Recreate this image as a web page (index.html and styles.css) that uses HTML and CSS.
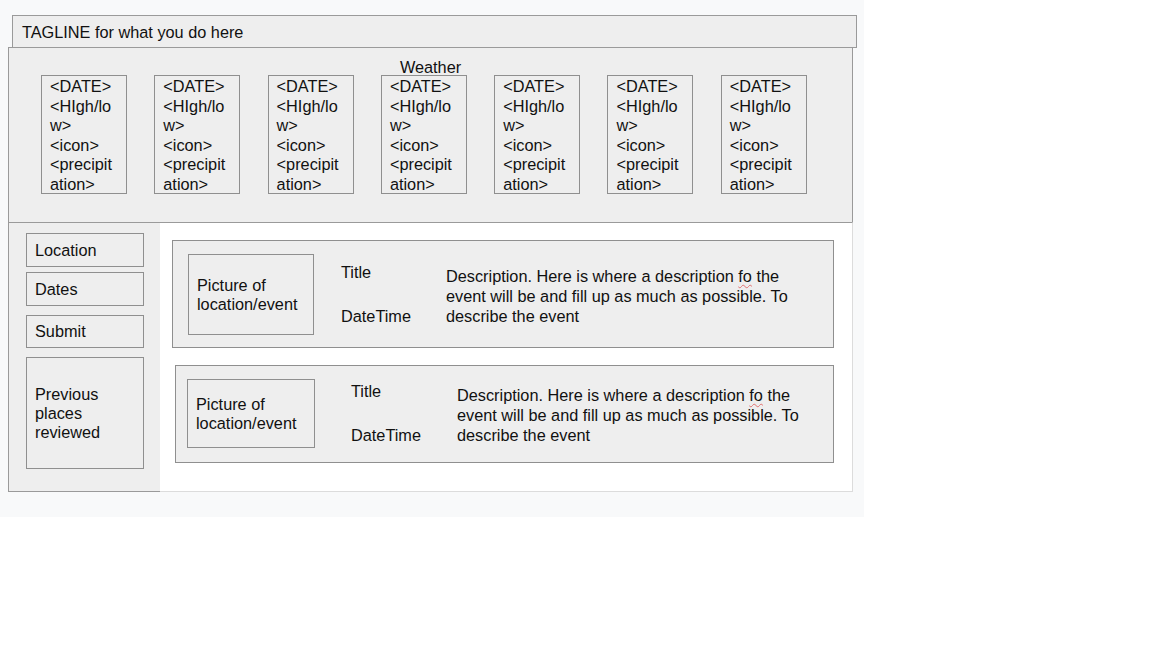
FILE: index.html
```html
<!DOCTYPE html>
<html lang="en">

<head>
    <meta charset="UTF-8">
    <meta name="viewport" content="width=device-width, initial-scale=1.0">
    <title>Wireframe</title>
    <link rel="stylesheet" href="styles.css">
</head>

<body>
    <div class="canvas">
        <!-- header -->
        <div class="tagline">TAGLINE for what you do here</div>

        <!-- weather strip -->
        <div class="weather">
            <div class="weather-title">Weather</div>
            <div class="day-row">
                <div class="day">&lt;DATE&gt;<br>&lt;HIgh/lo<br>w&gt;<br>&lt;icon&gt;<br>&lt;precipit<br>ation&gt;</div>
                <div class="day">&lt;DATE&gt;<br>&lt;HIgh/lo<br>w&gt;<br>&lt;icon&gt;<br>&lt;precipit<br>ation&gt;</div>
                <div class="day">&lt;DATE&gt;<br>&lt;HIgh/lo<br>w&gt;<br>&lt;icon&gt;<br>&lt;precipit<br>ation&gt;</div>
                <div class="day">&lt;DATE&gt;<br>&lt;HIgh/lo<br>w&gt;<br>&lt;icon&gt;<br>&lt;precipit<br>ation&gt;</div>
                <div class="day">&lt;DATE&gt;<br>&lt;HIgh/lo<br>w&gt;<br>&lt;icon&gt;<br>&lt;precipit<br>ation&gt;</div>
                <div class="day">&lt;DATE&gt;<br>&lt;HIgh/lo<br>w&gt;<br>&lt;icon&gt;<br>&lt;precipit<br>ation&gt;</div>
                <div class="day">&lt;DATE&gt;<br>&lt;HIgh/lo<br>w&gt;<br>&lt;icon&gt;<br>&lt;precipit<br>ation&gt;</div>
            </div>
        </div>

        <div class="lower">
            <!-- sidebar -->
            <div class="sidebar">
                <div class="side-btn">Location</div>
                <div class="side-btn side-btn--dates">Dates</div>
                <div class="side-btn side-btn--submit">Submit</div>
                <div class="side-history">Previous<br>places<br>reviewed</div>
            </div>

            <!-- events -->
            <div class="content">
                <div class="event event--a">
                    <div class="picture">Picture of<br>location/event</div>
                    <div class="meta">
                        <div class="meta-title">Title</div>
                        <div class="meta-date">DateTime</div>
                    </div>
                    <div class="desc">Description. Here is where a description <span class="typo">fo</span> the event will be and fill up as much as possible. To describe the event</div>
                </div>

                <div class="event event--b">
                    <div class="picture">Picture of<br>location/event</div>
                    <div class="meta">
                        <div class="meta-title">Title</div>
                        <div class="meta-date">DateTime</div>
                    </div>
                    <div class="desc">Description. Here is where a description <span class="typo">fo</span> the event will be and fill up as much as possible. To describe the event</div>
                </div>
            </div>
        </div>
    </div>
</body>

</html>
```

FILE: styles.css
```css
* {
    box-sizing: border-box;
}

body {
    margin: 0;
    background: #ffffff;
    font-family: "Liberation Sans", Arial, sans-serif;
    font-size: 16.3px;
    color: #111;
}

.canvas {
    width: 864px;
    height: 517px;
    background: #f8f9fa;
    padding-top: 15px;
    padding-left: 8px;
}

.tagline {
    margin-left: 4px;
    width: 845px;
    height: 33px;
    padding: 1px 0 0 9px;
    line-height: 31px;
    background: #eeeeee;
    border: 1px solid #9a9a9a;
}

.weather {
    margin-top: -1px;
    width: 845px;
    height: 176px;
    background: #eeeeee;
    border: 1px solid #9a9a9a;
    padding-top: 10px;
}

.weather-title {
    text-align: center;
    line-height: 18px;
    margin-bottom: -1px;
}

.day-row {
    display: flex;
    gap: 27.3px;
    padding-left: 32px;
}

.day {
    width: 86px;
    height: 119px;
    padding: 1px 0 0 8px;
    line-height: 19.5px;
    border: 1px solid #8f8f8f;
    background: #eeeeee;
}

.lower {
    display: flex;
    margin-top: -1px;
    height: 270px;
}

.sidebar {
    width: 153px;
    background: #eeeeee;
    border: 1px solid #9a9a9a;
    padding: 10px 0 0 17px;
    display: flex;
    flex-direction: column;
}

.side-btn {
    width: 118px;
    height: 34px;
    padding-left: 8px;
    line-height: 32px;
    border: 1px solid #8f8f8f;
}

.side-btn--dates {
    margin-top: 5px;
}

.side-btn--submit {
    margin-top: 9px;
    height: 33px;
    line-height: 31px;
}

.side-history {
    margin-top: 9px;
    width: 118px;
    height: 112px;
    padding-left: 8px;
    line-height: 19px;
    border: 1px solid #8f8f8f;
    display: flex;
    align-items: center;
}

.content {
    width: 693px;
    background: #ffffff;
    border-top: 1px solid #9a9a9a;
    border-right: 1px solid #dcdcdc;
    border-bottom: 1px solid #dcdcdc;
    margin-left: -1px;
    padding-top: 17px;
}

.event {
    display: flex;
    align-items: flex-start;
    background: #eeeeee;
    border: 1px solid #8f8f8f;
}

.picture {
    display: flex;
    align-items: center;
    padding-left: 8px;
    line-height: 19px;
    border: 1px solid #8f8f8f;
}

.meta-title,
.meta-date {
    line-height: 18px;
}

.meta-date {
    margin-top: 26px;
}

.desc {
    width: 352px;
    line-height: 20px;
}

.typo {
    text-decoration: underline wavy #e07070;
    text-decoration-thickness: 1px;
    text-underline-offset: 2px;
}

/* first card */
.event--a {
    margin-left: 12px;
    width: 662px;
    height: 108px;
    padding: 13px 0 0 15px;
}

.event--a .picture {
    width: 126px;
    height: 81px;
}

.event--a .meta {
    margin: 9px 0 0 27px;
    width: 105px;
}

.event--a .desc {
    margin-top: 12px;
}

/* second card */
.event--b {
    margin: 17px 0 0 15px;
    width: 659px;
    height: 98px;
    padding: 13px 0 0 11px;
}

.event--b .picture {
    width: 128px;
    height: 69px;
}

.event--b .meta {
    margin: 3px 0 0 36px;
    width: 106px;
}

.event--b .desc {
    margin-top: 6px;
}
```
